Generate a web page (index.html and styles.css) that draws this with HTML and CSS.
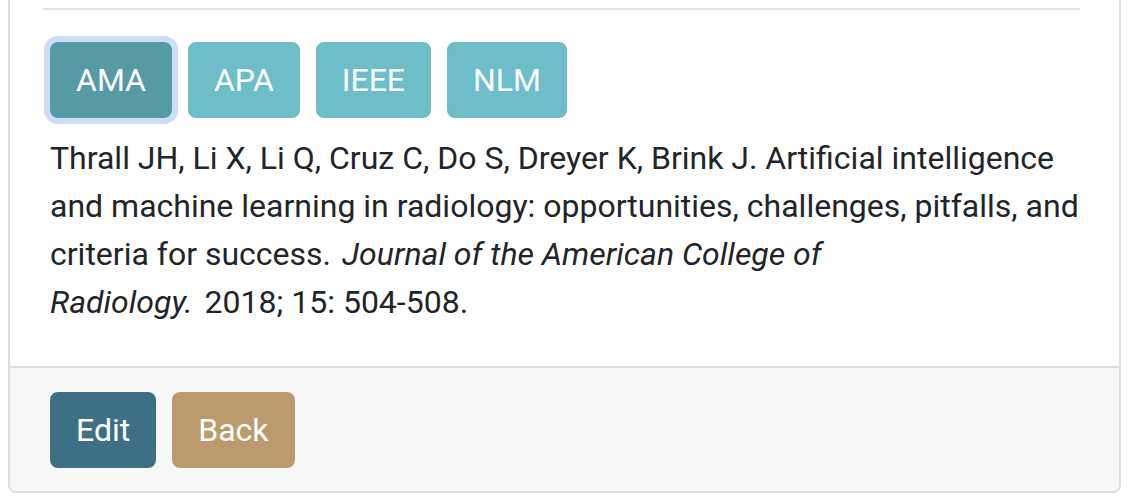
FILE: index.html
```html
<!DOCTYPE html>
<html>
<head>
<meta charset="utf-8">
<link rel="stylesheet" href="styles.css">
</head>
<body>
<div class="page">
  <div class="card">
    <div class="card-body">
      <hr class="rule">
      <div class="styles">
        <button class="btn btn-style active">AMA</button>
        <button class="btn btn-style">APA</button>
        <button class="btn btn-style">IEEE</button>
        <button class="btn btn-style">NLM</button>
      </div>
      <p class="citation">Thrall JH, Li X, Li Q, Cruz C, Do S, Dreyer K, Brink J. Artificial intelligence and machine learning in radiology: opportunities, challenges, pitfalls, and criteria for success. <i class="journal">Journal of the American College of Radiology.</i>&nbsp;2018;&nbsp;15:&nbsp;504-508.</p>
    </div>
    <div class="card-footer">
      <button class="btn btn-edit">Edit</button>
      <button class="btn btn-back">Back</button>
    </div>
  </div>
</div>
</body>
</html>
```

FILE: styles.css
```css
html, body {
  margin: 0;
  padding: 0;
  background: #ffffff;
}
body {
  font-family: Roboto, "Liberation Sans", sans-serif;
  color: #212529;
  font-size: 32px;
  line-height: 48px;
}
.page {
  padding: 0 11px 0 8px;
  overflow: hidden;
  height: 504px;
}
.card {
  margin-top: -34px;
  border: 2px solid #dddddd;
  border-radius: 8px;
  background: #ffffff;
  overflow: hidden;
}
.card-body {
  padding: 40px 40px 40px 40px;
}
.rule {
  border: 0;
  border-top: 2px solid #e4e4e4;
  margin: 0 -1px 32px -7px;
  height: 0;
}
.styles {
  display: flex;
  gap: 16px;
}
.btn {
  font-family: Roboto, "Liberation Sans", sans-serif;
  font-size: 32px;
  line-height: 48px;
  padding: 12px 24px;
  border: 2px solid transparent;
  border-radius: 8px;
  color: #ffffff;
  cursor: pointer;
}
.btn-style {
  background: #6dbec9;
  border-color: #6dbec9;
}
.btn-style.active {
  background: #559aa4;
  border-color: #559aa4;
  box-shadow: 0 0 0 6px #cddcf8;
}
.citation {
  margin: 16px 0 0 0;
}
.journal {
  margin-left: 3px;
  margin-right: 4px;
}
.card-footer {
  background: #f7f7f7;
  border-top: 2px solid #dddddd;
  padding: 24px 40px 23px 40px;
  display: flex;
  gap: 16px;
}
.btn-edit {
  background: #3e7085;
  border-color: #3e7085;
}
.btn-back {
  background: #bb9a6e;
  border-color: #bb9a6e;
}
```
